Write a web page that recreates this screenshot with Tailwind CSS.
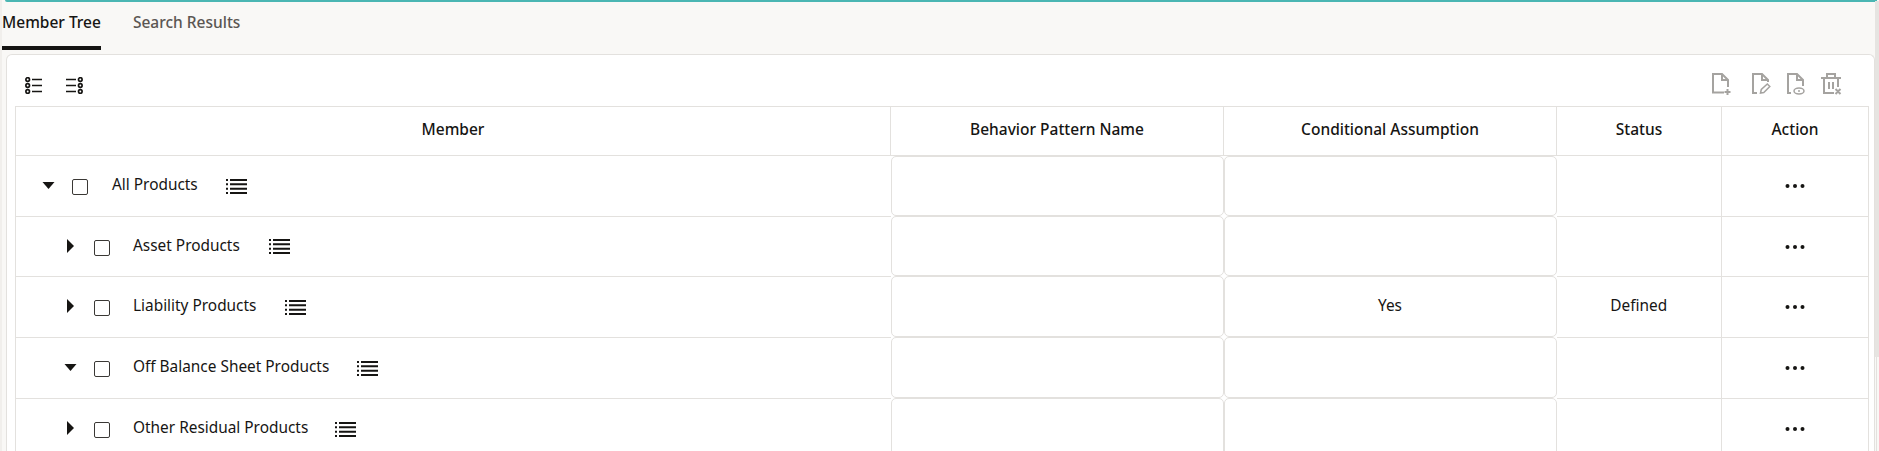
<!DOCTYPE html>
<html lang="en">
<head>
    <meta charset="UTF-8">
    <title>Member Tree</title>
    <script src="https://cdn.jsdelivr.net/npm/@tailwindcss/browser@4"></script>
</head>
<body class="relative h-[451px] overflow-hidden bg-[#f9f8f6] font-['Noto_Sans',sans-serif] text-[#161513]">
    <svg class="hidden">
        <symbol id="list" viewBox="0 0 21 15">
            <path d="M0 1h2M4 1h17M0 5.330h2M4 5.330h17M0 9.670h2M4 9.670h17M0 14h2M4 14h17" stroke="#161513" stroke-width="2" fill="none"/>
        </symbol>
        <symbol id="dots" viewBox="0 0 20 6">
            <circle cx="2.500" cy="3" r="2"/><circle cx="10" cy="3" r="2"/><circle cx="17.500" cy="3" r="2"/>
        </symbol>
    </svg>

    <div class="ml-[5px] mr-[2px] h-[2px] rounded-bl-[2px] bg-[#4bb6b3]"></div>

    <div class="flex h-[52px] pl-[2px]">
        <div class="h-[48px] border-b-4 border-[#161513] pt-[9px] text-[15.500px] font-medium leading-[22px]">Member Tree</div>
        <div class="ml-[32px] pt-[9px] text-[15.500px] font-medium leading-[22px] text-[#5b5652]">Search Results</div>
    </div>

    <div class="ml-[6px] mr-[4px] h-[397px] rounded-t-[6px] border border-b-0 border-[#e3e1de] bg-white pl-[8px] pr-[6px]">
        <div class="flex h-[51px] items-center justify-between pl-[10px] pr-[26px] pt-[10px]">
            <div class="flex items-center gap-[22px]">
                <svg width="18" height="17" viewBox="0 0 18 17" fill="none" stroke="#161513" stroke-width="1.700">
                    <circle cx="2.700" cy="2.500" r="1.800"/><circle cx="2.700" cy="8.500" r="1.800"/><circle cx="2.700" cy="14.500" r="1.800"/>
                    <path d="M7 2.500h10M7 8.500h10M7 14.500h10"/>
                </svg>
                <svg width="18" height="17" viewBox="0 0 18 17" fill="none" stroke="#161513" stroke-width="1.700">
                    <circle cx="15.300" cy="2.500" r="1.800"/><circle cx="15.300" cy="8.500" r="1.800"/><circle cx="15.300" cy="14.500" r="1.800"/>
                    <path d="M1 2.500h10M1 8.500h10M1 14.500h10"/>
                </svg>
            </div>
            <div class="-mt-[3px] flex items-center gap-[16px] text-[#a5a3a0]">
                <svg class="mr-[4px]" width="20" height="22" viewBox="0 0 20 22" fill="none" stroke="currentColor" stroke-width="2">
                    <path d="M12 19.500H1V1h9l6 6v7M10 1v6h6M15.500 16v6M12.500 19h6"/>
                </svg>
                <svg width="19" height="22" viewBox="0 0 19 22" fill="none" stroke="currentColor" stroke-width="2">
                    <path d="M5 20H1V1h9l6 6v2M10 1v6h6"/>
                    <path d="M8.500 20l.8-3.500 6-5.500 2.500 2.500-6 6z" stroke-width="1.500"/>
                </svg>
                <svg width="18" height="22" viewBox="0 0 18 22" fill="none" stroke="currentColor" stroke-width="2">
                    <path d="M4 20H1V1h9l6 6v6M10 1v6h6"/>
                    <ellipse cx="12" cy="18" rx="5" ry="3" stroke-width="1.500"/><circle cx="12" cy="18" r="1" fill="currentColor" stroke="none"/>
                </svg>
                <svg width="21" height="22" viewBox="0 0 21 22" fill="none" stroke="currentColor" stroke-width="2">
                    <path d="M0 5h20M6 5V1h8v4M3 5v15h10M17 5v9M8 9v7M12 9v7M14.500 16l5 5M19.500 16l-5 5"/>
                </svg>
            </div>
        </div>

        <table class="w-[1853px] table-fixed border-collapse text-[15.400px] leading-[22px]">
            <colgroup>
                <col class="w-[875px]"><col class="w-[333px]"><col class="w-[333px]"><col class="w-[165px]"><col class="w-[147px]">
            </colgroup>
            <thead>
                <tr class="h-[49px] text-center text-[15.500px]">
                    <th class="border border-[#e3e1de] pb-[5px] font-medium">Member</th>
                    <th class="border border-[#e3e1de] pb-[5px] font-medium">Behavior Pattern Name</th>
                    <th class="border border-[#e3e1de] pb-[5px] font-medium">Conditional Assumption</th>
                    <th class="border border-[#e3e1de] pb-[5px] font-medium">Status</th>
                    <th class="border border-[#e3e1de] pb-[5px] font-medium">Action</th>
                </tr>
            </thead>
            <tbody id="rows"></tbody>
        </table>
    </div>

    <!-- scrollbar -->
    <div class="absolute right-[2px] top-[357px] h-[94px] w-[1px] bg-[#e3e1de]"></div>
    <div class="absolute right-0 top-[1px] h-[356px] w-[4px] bg-[#e6e4e1]"></div>
    <div class="absolute left-0 top-0 h-[451px] w-[2px] bg-[#f1efec]"></div>

    <script>
        const caretDown = 'M0 0h12L6 7z';
        const caretRight = 'M0 0l7 7-7 7z';
        const members = [
            { name: 'All Products', open: true, pad: 'pl-[26px]', gap: 'ml-[17px]', textGap: 'ml-[24px]', listGap: 'ml-[28px]', h: 'h-[60px]' },
            { name: 'Asset Products', pad: 'pl-[51px]', gap: 'ml-[20px]', textGap: 'ml-[23px]', listGap: 'ml-[29px]', h: 'h-[60px]' },
            { name: 'Liability Products', pad: 'pl-[51px]', gap: 'ml-[20px]', textGap: 'ml-[23px]', listGap: 'ml-[29px]', h: 'h-[61px]', assumption: 'Yes', status: 'Defined' },
            { name: 'Off Balance Sheet Products', open: true, pad: 'pl-[48px]', gap: 'ml-[17px]', textGap: 'ml-[23px]', listGap: 'ml-[28px]', h: 'h-[61px]' },
            { name: 'Other Residual Products', pad: 'pl-[51px]', gap: 'ml-[20px]', textGap: 'ml-[23px]', listGap: 'ml-[27px]', h: 'h-[61px]' },
        ];

        document.getElementById('rows').innerHTML = members.map(m => `
            <tr class="${m.h}">
                <td class="border-y border-l border-[#e3e1de] p-0">
                    <div class="flex items-center ${m.pad}">
                        ${m.open
                            ? `<svg width="13" height="7" viewBox="0 0 12 7" fill="#161513"><path d="${caretDown}"/></svg>`
                            : `<svg class="-mt-[1px]" width="7" height="14" viewBox="0 0 7 14" fill="#161513"><path d="${caretRight}"/></svg>`}
                        <span class="${m.gap} mt-[3px] size-[16px] rounded-[2px] border-[1.300px] border-[#3a3835]"></span>
                        <span class="${m.textGap} -mt-[1px]">${m.name}</span>
                        <svg class="${m.listGap} mt-[1px]" width="21" height="15"><use href="#list"/></svg>
                    </div>
                </td>
                <td class="p-0"><div class="${m.h} rounded-[5px] border border-[#e3e1de]"></div></td>
                <td class="p-0"><div class="${m.h} flex items-center justify-center rounded-[5px] border border-[#e3e1de] pb-[2px]">${m.assumption || ''}</div></td>
                <td class="border-y border-r border-[#e3e1de] p-0 pb-[2px] text-center">${m.status || ''}</td>
                <td class="border border-[#e3e1de] p-0"><svg class="mx-auto mt-[1px] block" width="20" height="6" fill="#161513"><use href="#dots"/></svg></td>
            </tr>`).join('');
    </script>
</body>
</html>
